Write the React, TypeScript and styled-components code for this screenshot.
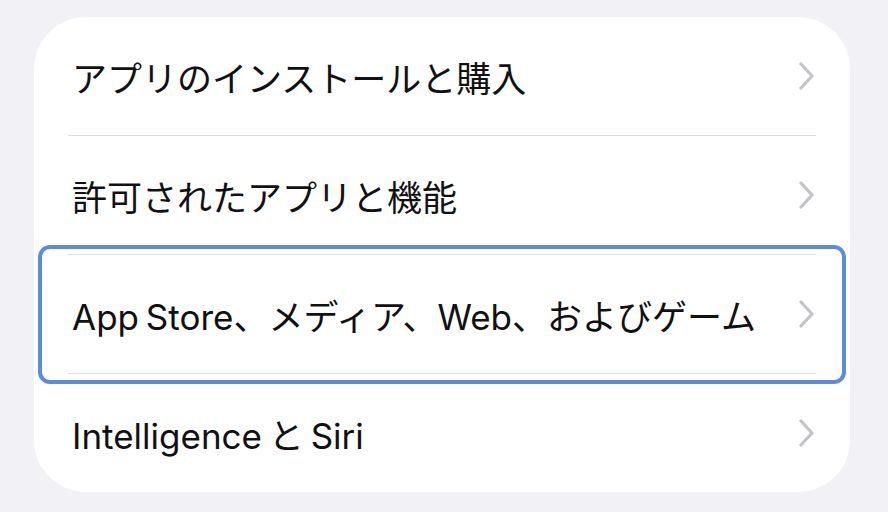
import styled, { createGlobalStyle } from "styled-components";

const GlobalStyle = createGlobalStyle`
  html, body {
    margin: 0;
    padding: 0;
    background: #f2f1f6;
  }
  body {
    font-family: Inter, "Noto Sans CJK JP", sans-serif;
    -webkit-font-smoothing: antialiased;
  }
`;

const Page = styled.div`
  width: 888px;
  height: 512px;
  box-sizing: border-box;
  padding: 17px 0 0 34px;
  background: #f2f1f6;
  overflow: hidden;
`;

const Card = styled.div`
  width: 816px;
  background: #ffffff;
  border-radius: 52px;
  display: flex;
  flex-direction: column;
`;

const Row = styled.div<{ $focused?: boolean }>`
  position: relative;
  padding: 0 34px;

  ${(p) =>
    p.$focused &&
    `
    &::after {
      content: "";
      position: absolute;
      top: -10px;
      bottom: -10px;
      left: 4px;
      right: 4px;
      border: 4px solid #5b8bdb;
      border-radius: 12px;
      pointer-events: none;
    }
  `}
`;

const RowInner = styled.div<{ $last?: boolean }>`
  height: 118px;
  display: flex;
  align-items: center;
  justify-content: space-between;
  border-bottom: ${(p) => (p.$last ? "none" : "1.5px solid #dedde2")};
`;

const Label = styled.span`
  padding-left: 4px;
  font-size: 35px;
  color: #111113;
  word-spacing: -3px;
`;

const Chevron = () => (
  <svg width="18" height="28" viewBox="0 0 18 28">
    <path
      d="M3 2 L14 14 L3 26"
      fill="none"
      stroke="#c4c3c8"
      strokeWidth="3.2"
      strokeLinecap="round"
      strokeLinejoin="round"
    />
  </svg>
);

const items = [
  "アプリのインストールと購入",
  "許可されたアプリと機能",
  "App Store、メディア、Web、およびゲーム",
  "Intelligence と Siri",
];

export default function App() {
  return (
    <>
      <GlobalStyle />
      <Page>
        <Card>
          {items.map((text, i) => (
            <Row key={text} $focused={i === 2}>
              <RowInner $last={i === items.length - 1}>
                <Label>{text}</Label>
                <Chevron />
              </RowInner>
            </Row>
          ))}
        </Card>
      </Page>
    </>
  );
}
